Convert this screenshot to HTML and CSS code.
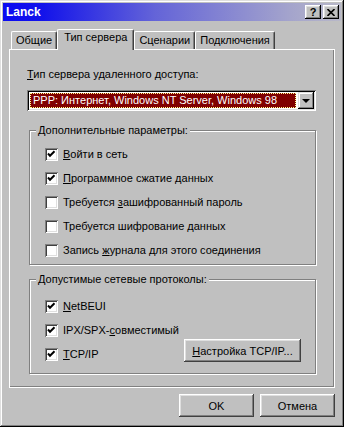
FILE: index.html
```html
<!DOCTYPE html>
<html lang="ru">
<head>
    <meta charset="UTF-8">
    <title>Lanck</title>
    <link rel="stylesheet" href="styles.css">
</head>
<body>
    <div class="window">
        <div class="titlebar">
            <span class="title">Lanck</span>
            <span class="title-btn">?</span>
            <span class="title-btn">
                <svg width="8" height="7" viewBox="0 0 8 7"><path d="M0.5 0 L7.5 7 M7.5 0 L0.5 7" stroke="#000" stroke-width="1.6"/></svg>
            </span>
        </div>

        <div class="content">
            <div class="tabs">
                <div class="tab">Общие</div>
                <div class="tab active">Тип сервера</div>
                <div class="tab">Сценарии</div>
                <div class="tab">Подключения</div>
            </div>

            <div class="panel">
                <div class="label"><u>Т</u>ип сервера удаленного доступа:</div>
                <div class="combo">
                    <div class="combo-value">PPP: Интернет, Windows NT Server, Windows 98</div>
                    <div class="combo-btn"><span class="arrow"></span></div>
                </div>

                <div class="group options">
                    <span class="group-title">Дополнительные параметры:</span>
                    <div class="check"><span class="box"><svg width="9" height="9" viewBox="0 0 9 9"><path d="M1 3.5 L3 5.8 L7.5 1.2" fill="none" stroke="#000" stroke-width="2"/></svg></span><span><u>В</u>ойти в сеть</span></div>
                    <div class="check"><span class="box"><svg width="9" height="9" viewBox="0 0 9 9"><path d="M1 3.5 L3 5.8 L7.5 1.2" fill="none" stroke="#000" stroke-width="2"/></svg></span><span><u>П</u>рограммное сжатие данных</span></div>
                    <div class="check"><span class="box"></span><span>Требуется <u>з</u>ашифрованный пароль</span></div>
                    <div class="check"><span class="box"></span><span>Требуется шифрование <u>д</u>анных</span></div>
                    <div class="check"><span class="box"></span><span>Запись <u>ж</u>урнала для этого соединения</span></div>
                </div>

                <div class="group protocols">
                    <span class="group-title">Допустимые сетевые протоколы:</span>
                    <div class="check"><span class="box"><svg width="9" height="9" viewBox="0 0 9 9"><path d="M1 3.5 L3 5.8 L7.5 1.2" fill="none" stroke="#000" stroke-width="2"/></svg></span><span><u>N</u>etBEUI</span></div>
                    <div class="check"><span class="box"><svg width="9" height="9" viewBox="0 0 9 9"><path d="M1 3.5 L3 5.8 L7.5 1.2" fill="none" stroke="#000" stroke-width="2"/></svg></span><span>IPX/SPX-<u>с</u>овместимый</span></div>
                    <div class="check">
                        <span class="box"><svg width="9" height="9" viewBox="0 0 9 9"><path d="M1 3.5 L3 5.8 L7.5 1.2" fill="none" stroke="#000" stroke-width="2"/></svg></span><span><u>T</u>CP/IP</span>
                        <button class="btn setup"><u>Н</u>астройка TCP/IP...</button>
                    </div>
                </div>
            </div>

            <div class="buttons">
                <button class="btn">OK</button>
                <button class="btn">Отмена</button>
            </div>
        </div>
    </div>
</body>
</html>
```

FILE: styles.css
```css
body {
    margin: 0;
    font-family: "Liberation Sans", Arial, sans-serif;
    font-size: 11px;
    color: #000;
    background: #c0c0c0;
}
.window {
    width: 344px;
    height: 427px;
    box-sizing: border-box;
    padding: 3px;
    background: #c0c0c0;
    box-shadow: inset -1px -1px #000, inset 1px 1px #dfdfdf, inset -2px -2px #808080, inset 2px 2px #fff;
}
.titlebar {
    height: 18px;
    display: flex;
    align-items: center;
    gap: 2px;
    padding: 0 2px 0 3px;
    background: linear-gradient(to right, #0a0af2 0%, #1414ea 12%, #6464d8 45%, #a4a4cc 85%, #b8b8c8 100%);
}
.title {
    flex: 1;
    color: #fff;
    font-weight: bold;
    font-size: 12px;
}
.title-btn {
    width: 16px;
    height: 14px;
    display: flex;
    align-items: center;
    justify-content: center;
    font-weight: bold;
    font-size: 11px;
    background: #c0c0c0;
    box-shadow: inset -1px -1px #000, inset 1px 1px #fff, inset -2px -2px #808080, inset 2px 2px #dfdfdf;
}
.content {
    padding: 0 6px;
}
.tabs {
    display: flex;
    align-items: flex-end;
    margin-top: 8px;
    padding-left: 2px;
    height: 20px;
}
.tab {
    height: 17px;
    line-height: 17px;
    padding: 0 4px;
    border: 1px solid #fff;
    border-bottom: none;
    border-right-color: #404040;
    border-radius: 2px 2px 0 0;
    box-shadow: inset -1px 0 #808080;
    background: #c0c0c0;
}
.tab.active {
    position: relative;
    z-index: 1;
    height: 20px;
    line-height: 15px;
    padding: 0 6px;
    margin-bottom: -1px;
}
.panel {
    height: 339px;
    box-sizing: border-box;
    padding: 18px 18px 0 17px;
    border: 1px solid #fff;
    box-shadow: inset -1px -1px #808080;
}
.label {
    line-height: 13px;
}
.combo {
    display: flex;
    height: 21px;
    box-sizing: border-box;
    margin-top: 9px;
    padding: 2px;
    background: #fff;
    box-shadow: inset 1px 1px #808080, inset -1px -1px #fff, inset 2px 2px #000, inset -2px -2px #dfdfdf;
}
.combo-value {
    flex: 1;
    margin: 1px 2px 0 1px;
    height: 15px;
    line-height: 15px;
    padding-left: 3px;
    color: #fff;
    background: #800000;
    outline: 1px dotted #ffff90;
    outline-offset: -1px;
    white-space: nowrap;
}
.combo-btn {
    width: 16px;
    height: 17px;
    display: flex;
    align-items: center;
    justify-content: center;
    background: #c0c0c0;
    box-shadow: inset -1px -1px #000, inset 1px 1px #dfdfdf, inset -2px -2px #808080, inset 2px 2px #fff;
}
.arrow {
    width: 0;
    height: 0;
    border-left: 4px solid transparent;
    border-right: 4px solid transparent;
    border-top: 4px solid #000;
}
.group {
    position: relative;
    display: flex;
    flex-direction: column;
    gap: 11px;
    margin-left: 2px;
    border: 1px solid #808080;
    box-shadow: inset 1px 1px #fff, 1px 1px #fff;
}
.options {
    margin-top: 19px;
    padding: 17px 0 7px 15px;
}
.protocols {
    margin-top: 14px;
    padding: 20px 14px 12px 15px;
}
.group-title {
    position: absolute;
    top: -7px;
    left: 6px;
    padding: 0 2px;
    line-height: 13px;
    background: #c0c0c0;
}
.check {
    display: flex;
    align-items: flex-start;
    height: 13px;
    line-height: 13px;
    white-space: nowrap;
}
.box {
    width: 13px;
    height: 13px;
    box-sizing: border-box;
    margin-right: 5px;
    display: flex;
    align-items: center;
    justify-content: center;
    background: #fff;
    box-shadow: inset 1px 1px #808080, inset -1px -1px #fff, inset 2px 2px #404040, inset -2px -2px #dfdfdf;
}
.btn {
    height: 23px;
    width: 75px;
    padding: 0;
    border: none;
    font-family: inherit;
    font-size: 11px;
    color: #000;
    background: #c0c0c0;
    box-shadow: inset -1px -1px #404040, inset 1px 1px #fff, inset -2px -2px #808080, inset 2px 2px #dfdfdf;
}
.setup {
    width: 117px;
    margin: -9px 0 -10px auto;
}
.buttons {
    display: flex;
    justify-content: flex-end;
    gap: 6px;
    margin-top: 6px;
}
```
